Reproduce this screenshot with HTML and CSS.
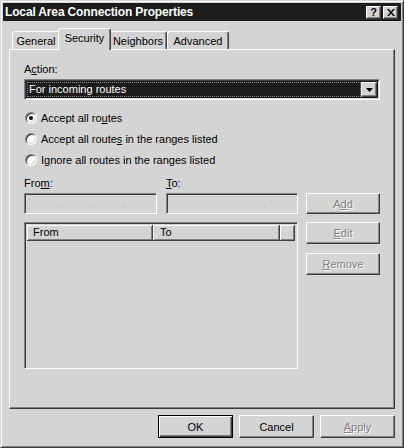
FILE: index.html
```html
<!DOCTYPE html>
<html>
<head>
<meta charset="utf-8">
<title>Local Area Connection Properties</title>
<link rel="stylesheet" href="styles.css">
</head>
<body>
<div class="window">
  <div class="titlebar">
    <span class="title">Local Area Connection Properties</span>
    <div class="tb-buttons">
      <span class="tb-btn help">?</span>
      <span class="tb-btn close"><svg width="8" height="7" viewBox="0 0 8 7"><path d="M0 0h2l2 2.5L6 0h2L5 3.5 8 7H6L4 4.5 2 7H0l3-3.5z" fill="#000"/></svg></span>
    </div>
  </div>
  <div class="body">
    <div class="tabs">
      <div class="tab t-general">General</div>
      <div class="tab active t-security">Security</div>
      <div class="tab t-neighbors">Neighbors</div>
      <div class="tab t-advanced">Advanced</div>
    </div>
    <div class="panel">
      <div class="label">A<u>c</u>tion:</div>
      <div class="combo">
        <div class="combo-value">For incoming routes</div>
        <div class="combo-btn"><svg width="7" height="4" viewBox="0 0 7 4"><path d="M0 0h7L3.5 4z" fill="#000"/></svg></div>
      </div>
      <div class="radios">
        <div class="radio-row"><span class="radio checked"></span><span class="radio-text">Accept all ro<u>u</u>tes</span></div>
        <div class="radio-row"><span class="radio"></span><span class="radio-text">Accept all route<u>s</u> in the ranges listed</span></div>
        <div class="radio-row"><span class="radio"></span><span class="radio-text">I<u>g</u>nore all routes in the ranges listed</span></div>
      </div>
      <div class="ranges">
        <div class="labels"><span class="lbl-from">Fro<u>m</u>:</span><span class="lbl-to"><u>T</u>o:</span></div>
        <div></div>
        <div class="fields">
          <div class="ip ip-from"><span class="seg"></span><span class="dot">.</span><span class="seg"></span><span class="dot">.</span><span class="seg"></span><span class="dot">.</span><span class="seg"></span></div>
          <div class="ip ip-to"><span class="seg"></span><span class="dot">.</span><span class="seg"></span><span class="dot">.</span><span class="seg"></span><span class="dot">.</span><span class="seg"></span></div>
        </div>
        <div class="btn disabled btn-add">A<u>d</u>d</div>
        <div class="list">
          <div class="list-header">
            <div class="hcell hc-from">From</div>
            <div class="hcell hc-to">To</div>
            <div class="hcell hc-fill"></div>
          </div>
        </div>
        <div class="side-btns">
          <div class="btn disabled"><u>E</u>dit</div>
          <div class="btn disabled"><u>R</u>emove</div>
        </div>
      </div>
    </div>
    <div class="footer">
      <div class="btn default">OK</div>
      <div class="btn">Cancel</div>
      <div class="btn disabled"><u>A</u>pply</div>
    </div>
  </div>
</div>
</body>
</html>
```
FILE: styles.css
```css
* { box-sizing: border-box; }
html, body { margin: 0; padding: 0; }
body {
  font-family: "Liberation Sans", Arial, sans-serif;
  font-size: 11px;
  color: #000;
  background: #d4d4d4;
}
u { text-decoration: underline; text-underline-offset: 1px; }

.window {
  width: 404px;
  height: 448px;
  background: #d4d4d4;
  border: 1px solid;
  border-color: #d4d4d4 #3a3a3a #3a3a3a #d4d4d4;
  box-shadow: inset 1px 1px #fff, inset -1px -1px #808080;
  padding: 2px;
  display: flex;
  flex-direction: column;
}

.titlebar {
  height: 18px;
  background: #1c1c1c;
  color: #fff;
  display: flex;
  align-items: center;
  justify-content: space-between;
  padding: 0 3px 0 2px;
}
.title {
  font-weight: bold;
  font-size: 12px;
  letter-spacing: -0.15px;
}
.tb-buttons { display: flex; gap: 2px; }
.tb-btn {
  width: 15px;
  height: 13px;
  background: #d4d4d4;
  border: 1px solid;
  border-color: #fff #404040 #404040 #fff;
  box-shadow: inset -1px -1px #808080;
  display: flex;
  align-items: center;
  justify-content: center;
  color: #000;
  font-weight: bold;
  font-size: 11px;
  line-height: 1;
}

.body {
  flex: 1;
  display: flex;
  flex-direction: column;
  padding: 7px 6px 0;
}

.tabs {
  height: 21px;
  display: flex;
  align-items: flex-end;
  padding-left: 3px;
  position: relative;
  z-index: 2;
}
.tab {
  height: 18px;
  border: 1px solid;
  border-bottom: none;
  border-color: #fff #404040 transparent #fff;
  border-radius: 3px 3px 0 0;
  box-shadow: inset -1px 0 #808080;
  background: #d4d4d4;
  display: flex;
  align-items: center;
  justify-content: center;
  padding-top: 1px;
}
.t-general { width: 48px; }
.t-neighbors { width: 58px; }
.t-advanced { width: 62px; }
.tab.active {
  width: 53px;
  height: 22px;
  margin: 0 -2px -1px;
  position: relative;
  z-index: 3;
  padding-top: 0;
  padding-bottom: 3px;
}

.panel {
  flex: 1;
  border: 1px solid;
  border-color: #fff #3a3a3a #3a3a3a #fff;
  box-shadow: inset -1px -1px #808080;
  padding: 12px 14px 0 14px;
  position: relative;
  z-index: 1;
}

.label { height: 14px; line-height: 14px; }

.combo {
  margin-top: 3px;
  height: 21px;
  display: flex;
  border: 1px solid;
  border-color: #808080 #fff #fff #808080;
  box-shadow: inset 1px 1px #404040, inset -1px -1px #d4d4d4;
  padding: 2px;
  background: #1c1c1c;
}
.combo-value {
  flex: 1;
  background: #1c1c1c;
  color: #fff;
  line-height: 15px;
  padding-left: 2px;
  outline: 1px dotted #888;
  outline-offset: -1px;
}
.combo-btn {
  width: 16px;
  background: #d4d4d4;
  border: 1px solid;
  border-color: #fff #404040 #404040 #fff;
  box-shadow: inset -1px -1px #808080;
  display: flex;
  align-items: center;
  justify-content: center;
}

.radios { margin-top: 7px; }
.radio-row {
  height: 21px;
  display: flex;
  align-items: center;
}
.radio {
  width: 12px;
  height: 12px;
  margin-left: 1px;
  border-radius: 50%;
  border: 1px solid;
  border-color: #808080 #fff #fff #808080;
  box-shadow: inset 1px 1px #303030, inset -1px -1px #d4d4d4;
  background: #fff;
  display: flex;
  align-items: center;
  justify-content: center;
}
.radio.checked::after {
  content: "";
  width: 4px;
  height: 4px;
  border-radius: 50%;
  background: #000;
}
.radio-text { margin-left: 4px; }

.ranges {
  margin-top: 6px;
  display: grid;
  grid-template-columns: 274px 74px;
  grid-template-rows: auto 21px auto;
  column-gap: 8px;
}
.labels {
  display: flex;
  height: 14px;
  line-height: 14px;
  margin-bottom: 3px;
}
.lbl-from { width: 142px; }

.fields { display: flex; gap: 9px; }
.ip {
  height: 21px;
  display: flex;
  align-items: center;
  border: 1px solid;
  border-color: #808080 #fff #fff #808080;
  box-shadow: inset 1px 1px #404040, inset -1px -1px #d4d4d4;
  padding: 0 2px;
  color: #9a9a9a;
}
.ip-from { width: 133px; }
.ip-to { width: 132px; }
.seg { flex: 1; }
.dot { width: 3px; font-size: 9px; text-align: center; }

.btn {
  height: 22px;
  background: #d4d4d4;
  border: 1px solid;
  border-color: #fff #404040 #404040 #fff;
  box-shadow: inset -1px -1px #808080;
  display: flex;
  align-items: center;
  justify-content: center;
}
.btn.disabled {
  color: #808080;
  text-shadow: 1px 1px #fff;
}
.btn-add { height: 21px; }

.list {
  margin-top: 8px;
  height: 147px;
  border: 1px solid;
  border-color: #808080 #fff #fff #808080;
  box-shadow: inset 1px 1px #404040, inset -1px -1px #d4d4d4;
  padding: 2px;
}
.list-header {
  display: flex;
  height: 16px;
}
.hcell {
  height: 16px;
  line-height: 15px;
  border-right: 1px solid #404040;
  border-bottom: 1px solid #404040;
  box-shadow: inset 1px 1px #fff, inset -1px -1px #808080;
  padding-left: 6px;
}
.hc-from { width: 126px; }
.hc-to { width: 127px; padding-left: 7px; }
.hc-fill { flex: 1; }

.side-btns {
  margin-top: 8px;
  display: flex;
  flex-direction: column;
  gap: 9px;
}

.footer {
  display: flex;
  justify-content: flex-end;
  gap: 6px;
  margin-top: 6px;
  padding-bottom: 7px;
}
.footer .btn { width: 75px; height: 23px; }
.btn.default {
  border: 1px solid #000;
  box-shadow: inset 1px 1px #fff, inset -1px -1px #404040, inset -2px -2px #808080;
}
```
